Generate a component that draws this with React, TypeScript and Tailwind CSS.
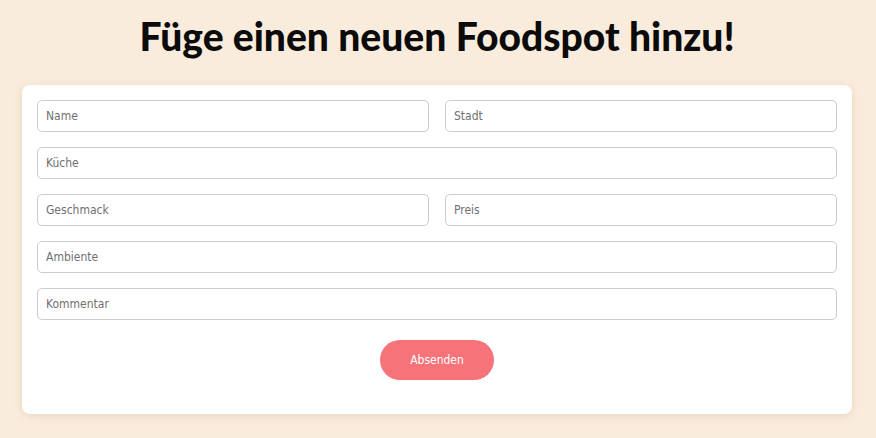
import React from 'react';

const inputCls =
  'h-8 w-full rounded-[5px] border border-[#cccccc] bg-white px-2 text-[12px] text-[#555] placeholder:text-[#707070] outline-none';

function Field({ placeholder }: { placeholder: string }) {
  return <input type="text" placeholder={placeholder} className={inputCls} />;
}

export default function App() {
  return (
    <div className="min-h-[438px] w-full bg-[#faecdc] pl-[22px] pr-[24px] pt-[12px] font-['DejaVu_Sans_Condensed','Open_Sans',sans-serif]">
      <h1 className="text-center font-['Lato',sans-serif] text-[39px] font-black leading-[48px] text-[#0b0b0b]">
        Füge einen neuen Foodspot hinzu!
      </h1>

      {/* Form card */}
      <form
        className="mt-[25px] flex flex-col gap-[15px] rounded-lg bg-white px-[15px] pt-[15px] pb-[34px] shadow-[0_2px_8px_rgba(180,150,120,0.25)]"
        onSubmit={(e) => e.preventDefault()}
      >
        <div className="grid grid-cols-2 gap-4">
          <Field placeholder="Name" />
          <Field placeholder="Stadt" />
        </div>
        <Field placeholder="Küche" />
        <div className="grid grid-cols-2 gap-4">
          <Field placeholder="Geschmack" />
          <Field placeholder="Preis" />
        </div>
        <Field placeholder="Ambiente" />
        <Field placeholder="Kommentar" />
        <div className="mt-[5px] flex justify-center">
          <button
            type="submit"
            className="h-10 w-[114px] rounded-full bg-[#f6737a] text-[12px] text-white"
          >
            Absenden
          </button>
        </div>
      </form>
    </div>
  );
}
